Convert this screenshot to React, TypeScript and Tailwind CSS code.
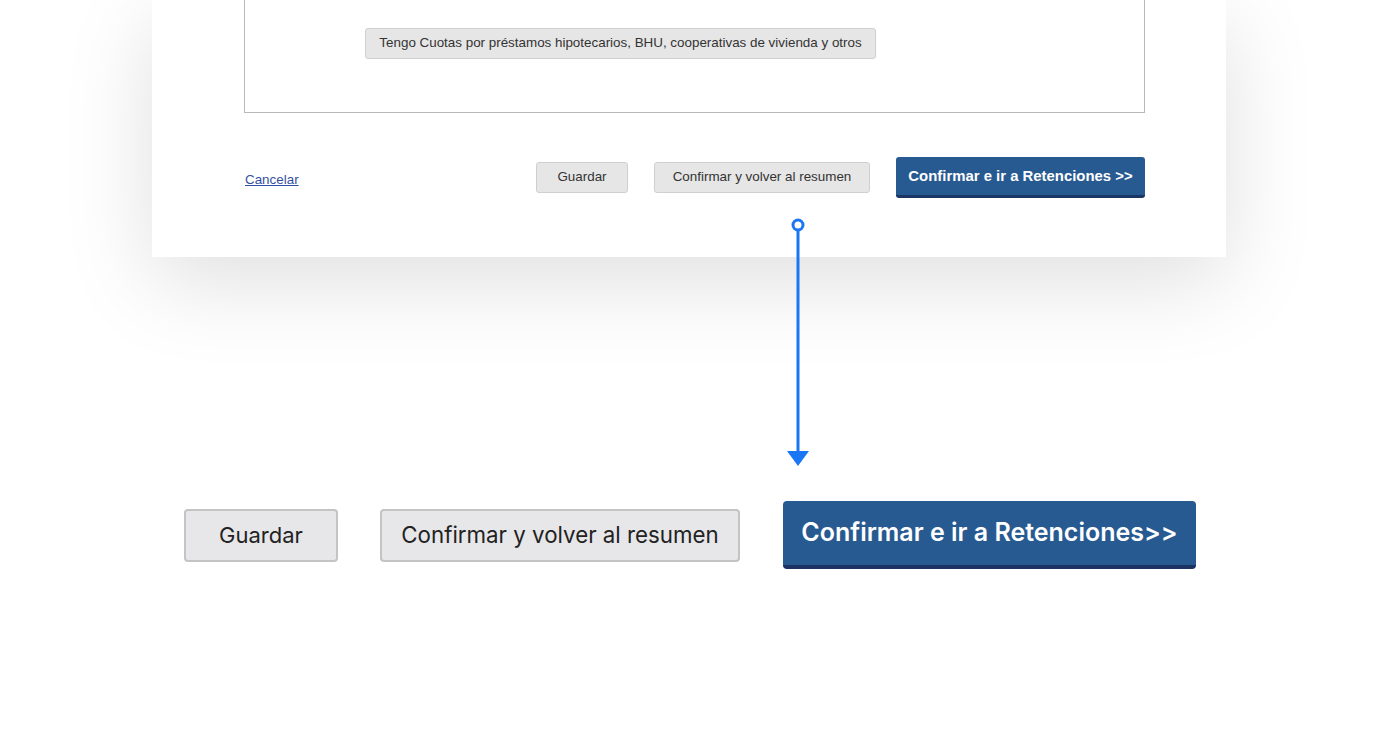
import React from 'react';

const legacyFont = { fontFamily: '"Liberation Sans", Arial, sans-serif' };
const modernFont = { fontFamily: 'Inter, "Noto Sans", sans-serif' };

const FlowArrow: React.FC = () => (
  <svg
    className="absolute left-[787px] top-[216px]"
    width="22"
    height="252"
    viewBox="0 0 22 252"
    fill="none"
  >
    <circle cx="11" cy="9" r="5" stroke="#1a76f2" strokeWidth="3" fill="white" />
    <line x1="11" y1="14" x2="11" y2="238" stroke="#1a76f2" strokeWidth="3" />
    <path d="M0 235 L22 235 L11 250 Z" fill="#1a76f2" />
  </svg>
);

const App: React.FC = () => {
  return (
    <div className="relative w-[1380px] h-[740px] bg-white overflow-hidden">
      {/* old form, shown as a floating card */}
      <div
        className="ml-[152px] w-[1074px] h-[257px] bg-white shadow-[0_24px_90px_rgba(0,0,0,0.13)]"
        style={legacyFont}
      >
        <div className="ml-[92px] w-[901px] h-[113px] border border-t-0 border-[#b8b8b8] pt-[28px] pl-[120px]">
          <button className="h-[31px] w-[511px] bg-[#e6e6e6] border border-[#cfcfcf] rounded-[3px] text-[13.4px] text-[#333]">
            Tengo Cuotas por préstamos hipotecarios, BHU, cooperativas de vivienda y otros
          </button>
        </div>

        <div className="ml-[92px] w-[901px] mt-[44px] flex items-center">
          <a href="#" className="ml-px mt-[5px] text-[13.4px] text-[#3450a0] underline">
            Cancelar
          </a>
          <div className="ml-auto flex items-center gap-[26px]">
            <button className="w-[92px] h-[31px] bg-[#e6e6e6] border border-[#cfcfcf] rounded-[3px] text-[13.4px] text-[#333]">
              Guardar
            </button>
            <button className="w-[216px] h-[31px] bg-[#e6e6e6] border border-[#cfcfcf] rounded-[3px] text-[13.4px] text-[#333]">
              Confirmar y volver al resumen
            </button>
            <button className="w-[249px] h-[41px] bg-[#275a91] border-b-[3px] border-[#1b3564] rounded-[3px] text-[14.9px] font-bold text-white">
              Confirmar e ir a Retenciones &gt;&gt;
            </button>
          </div>
        </div>
      </div>

      <FlowArrow />

      {/* redesigned buttons */}
      <div className="mt-[244px] ml-[184px] flex items-center" style={modernFont}>
        <button className="w-[154px] h-[53px] bg-[#e7e7e9] border-2 border-[#c4c4c4] rounded-[4px] text-[22px] text-[#222]">
          Guardar
        </button>
        <button className="ml-[42px] w-[360px] h-[53px] bg-[#e7e7e9] border-2 border-[#c4c4c4] rounded-[4px] text-[22.3px] text-[#222]">
          Confirmar y volver al resumen
        </button>
        <button className="ml-[43px] w-[413px] h-[68px] bg-[#275a91] border-b-[4px] border-[#1b3262] rounded-[4px] text-[25px] font-semibold text-white">
          Confirmar e ir a Retenciones&gt;&gt;
        </button>
      </div>
    </div>
  );
};

export default App;
